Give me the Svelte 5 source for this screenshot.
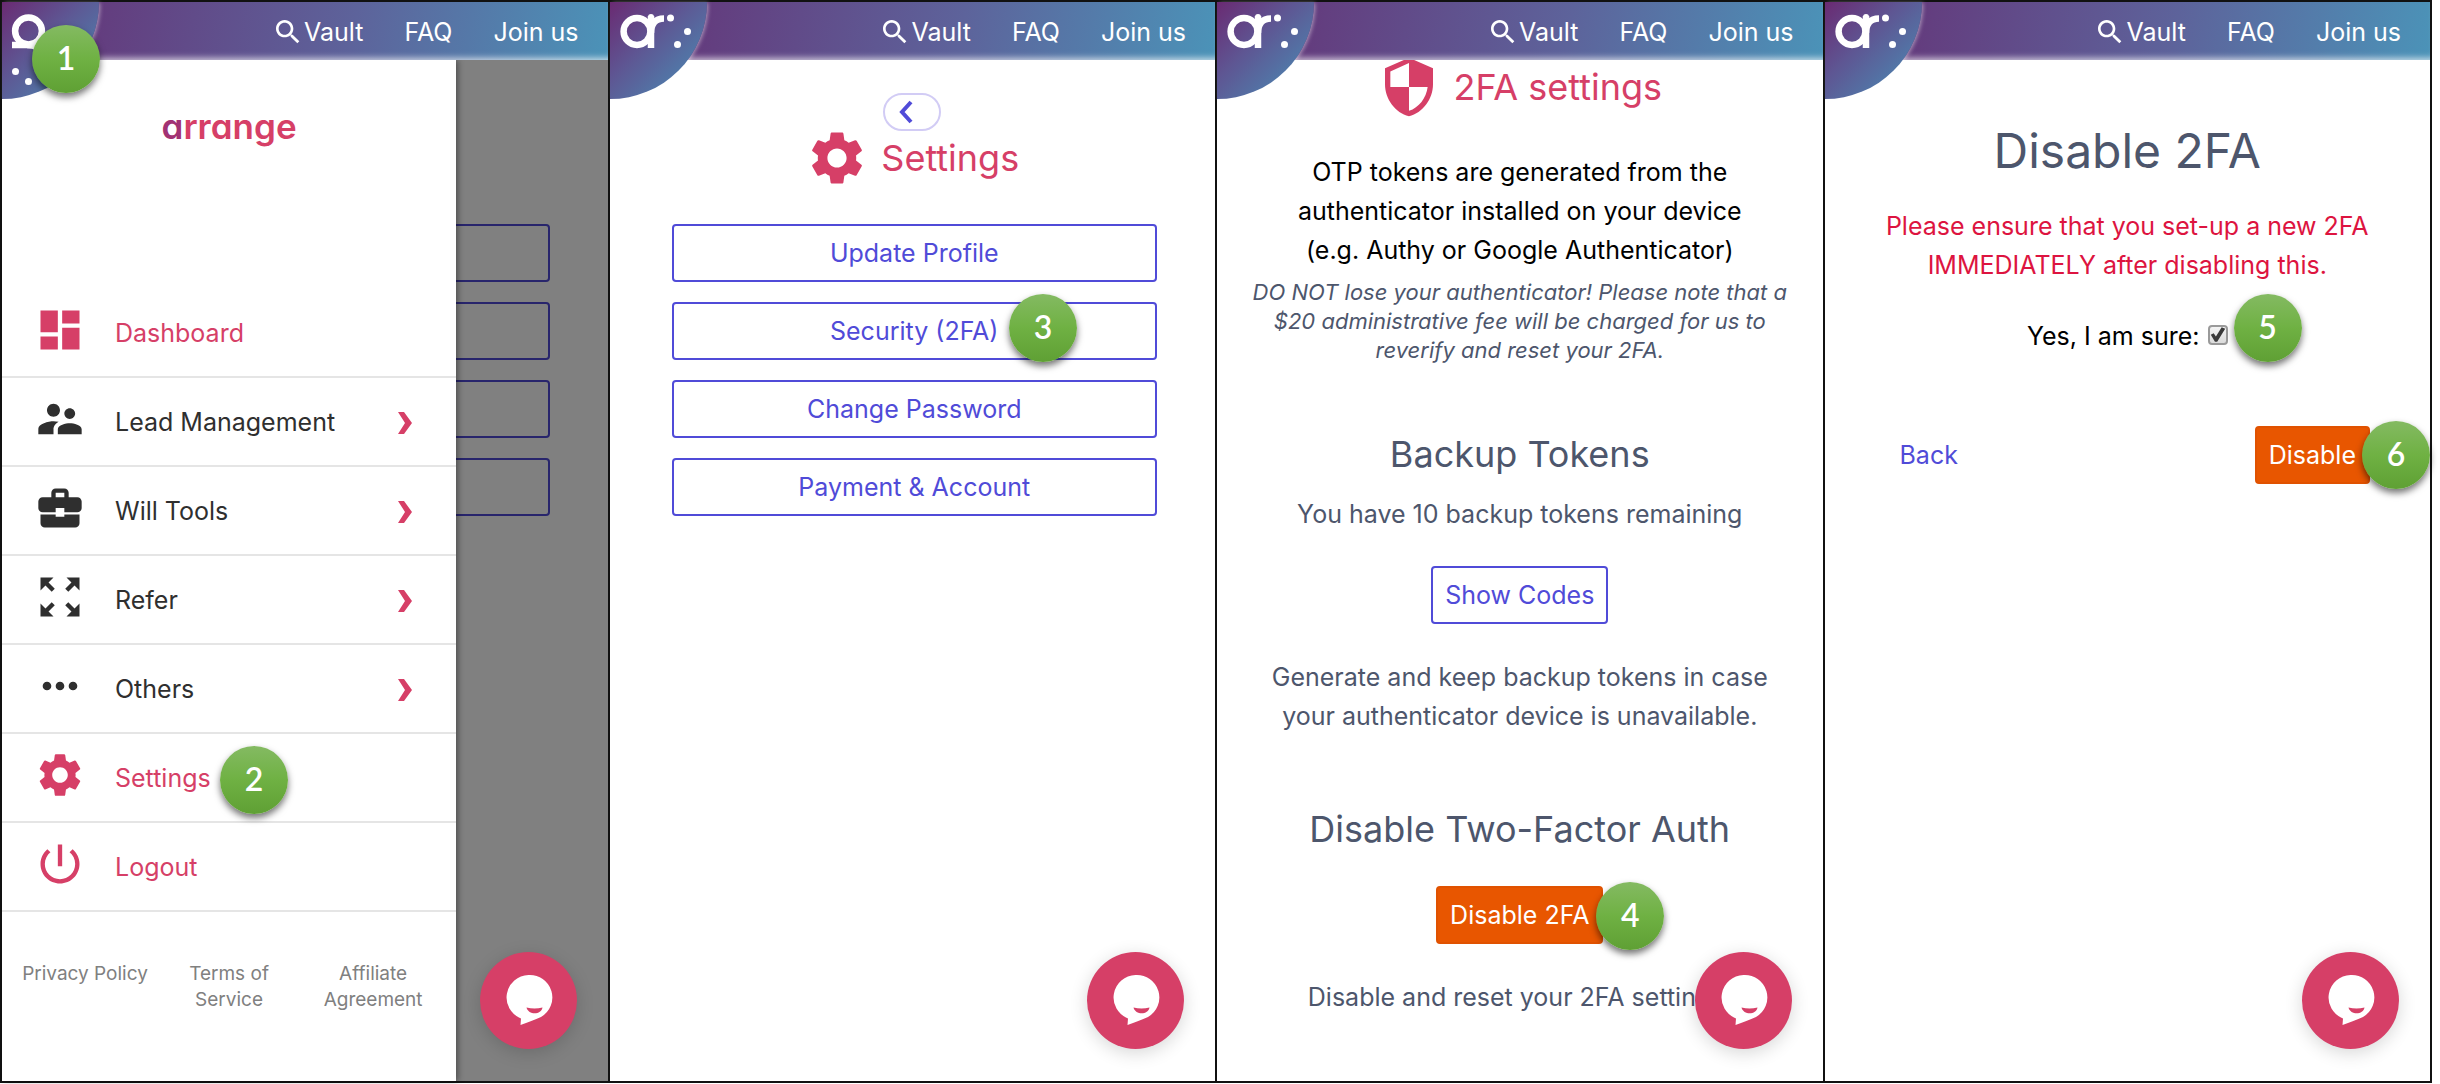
<script lang="ts">
  interface MenuItem {
    label: string;
    icon: string;
    accent?: boolean;
    expands?: boolean;
    step?: number;
  }

  const icons: Record<string, string> = {
    search: 'M15.5 14h-.79l-.28-.27C15.41 12.59 16 11.11 16 9.5 16 5.91 13.09 3 9.5 3S3 5.91 3 9.5 5.91 16 9.5 16c1.61 0 3.09-.59 4.23-1.57l.27.28v.79l5 4.99L20.49 19l-4.99-5zm-6 0C7.01 14 5 11.99 5 9.5S7.01 5 9.5 5 14 7.01 14 9.5 11.99 14 9.5 14z',
    dashboard: 'M3 13h8V3H3v10zm0 8h8v-6H3v6zm10 0h8V11h-8v10zm0-18v6h8V3h-8z',
    people: 'M16.5 12c1.38 0 2.49-1.12 2.49-2.5S17.88 7 16.5 7C15.12 7 14 8.12 14 9.5s1.12 2.5 2.5 2.5zM9 11c1.66 0 2.99-1.34 2.99-3S10.66 5 9 5C7.34 5 6 6.34 6 8s1.34 3 3 3zm7.5 3c-1.83 0-5.5.92-5.5 2.75V19h11v-2.25c0-1.83-3.67-2.75-5.5-2.75zM9 13c-2.33 0-7 1.17-7 3.5V19h7v-2.25c0-.85.33-2.34 2.37-3.47C10.5 13.1 9.66 13 9 13z',
    briefcase: 'M10 16v-1H3v4c0 1.11.89 2 2 2h14c1.11 0 2-.89 2-2v-4h-7v1h-4zm10-9h-4V5c0-1.11-.89-2-2-2h-4c-1.11 0-2 .89-2 2v2H4c-1.1 0-2 .9-2 2v3c0 1.11.89 2 2 2h6v-2h4v2h6c1.1 0 2-.9 2-2V9c0-1.1-.9-2-2-2zm-6 0h-4V5h4v2z',
    expand: 'M15 3l2.3 2.3-2.89 2.87 1.42 1.42L18.7 6.7 21 9V3zM3 9l2.3-2.3 2.87 2.89 1.42-1.42L6.7 5.3 9 3H3zm6 12l-2.3-2.3 2.89-2.87-1.42-1.42L5.3 17.3 3 15v6zm12-6l-2.3 2.3-2.87-2.89-1.42 1.42 2.89 2.87L15 21h6z',
    more: 'M6 10c-1.1 0-2 .9-2 2s.9 2 2 2 2-.9 2-2-.9-2-2-2zm12 0c-1.1 0-2 .9-2 2s.9 2 2 2 2-.9 2-2-.9-2-2-2zm-6 0c-1.1 0-2 .9-2 2s.9 2 2 2 2-.9 2-2-.9-2-2-2z',
    gear: 'M19.14 12.94c.04-.3.06-.61.06-.94 0-.32-.02-.64-.07-.94l2.03-1.58c.18-.14.23-.41.12-.61l-1.92-3.32c-.12-.22-.37-.29-.59-.22l-2.39.96c-.5-.38-1.03-.7-1.62-.94l-.36-2.54c-.04-.24-.24-.41-.48-.41h-3.84c-.24 0-.43.17-.47.41l-.36 2.54c-.59.24-1.13.57-1.62.94l-2.39-.96c-.22-.08-.47 0-.59.22L2.74 8.87c-.12.21-.08.47.12.61l2.03 1.58c-.05.3-.09.63-.09.94s.02.64.07.94l-2.03 1.58c-.18.14-.23.41-.12.61l1.92 3.32c.12.22.37.29.59.22l2.39-.96c.5.38 1.03.7 1.62.94l.36 2.54c.05.24.24.41.48.41h3.84c.24 0 .44-.17.47-.41l.36-2.54c.59-.24 1.13-.56 1.62-.94l2.39.96c.22.08.47 0 .59-.22l1.92-3.32c.12-.22.07-.47-.12-.61l-2.01-1.58zM12 15.6c-1.98 0-3.6-1.62-3.6-3.6s1.62-3.6 3.6-3.6 3.6 1.62 3.6 3.6-1.62 3.6-3.6 3.6z',
    power: 'M13 3h-2v10h2V3zm4.83 2.17l-1.42 1.42C17.99 7.86 19 9.81 19 12c0 3.87-3.13 7-7 7s-7-3.13-7-7c0-2.19 1.01-4.14 2.58-5.42L6.17 5.17C4.23 6.82 3 9.26 3 12c0 4.97 4.03 9 9 9s9-4.03 9-9c0-2.74-1.23-5.18-3.17-6.83z',
    shield: 'M12 1L3 5v6c0 5.55 3.84 10.74 9 12 5.16-1.26 9-6.45 9-12V5l-9-4zM12 3v9H5V6.2zM12 12h7c-.53 4.12-3.28 7.79-7 8.94z',
  };

  const menu: MenuItem[] = [
    { label: 'Dashboard', icon: 'dashboard', accent: true },
    { label: 'Lead Management', icon: 'people', expands: true },
    { label: 'Will Tools', icon: 'briefcase', expands: true },
    { label: 'Refer', icon: 'expand', expands: true },
    { label: 'Others', icon: 'more', expands: true },
    { label: 'Settings', icon: 'gear', accent: true, step: 2 },
    { label: 'Logout', icon: 'power', accent: true },
  ];

  const legal = ['Privacy Policy', 'Terms of Service', 'Affiliate Agreement'];
  const settings = ['Update Profile', 'Security (2FA)', 'Change Password', 'Payment & Account'];

  let sure = $state(true);
</script>

{#snippet icon(name: string)}
  <svg class="icon" viewBox="0 0 24 24" aria-hidden="true">
    <path fill="currentColor" fill-rule="evenodd" d={icons[name]} />
  </svg>
{/snippet}

{#snippet step(n: number)}
  <span class="step step-{n}">{n}</span>
{/snippet}

{#snippet header(open: boolean)}
  <header class="topbar">
    <button class="corner" class:open aria-label="Menu">
      <svg viewBox="0 0 97 97" aria-hidden="true">
        <g fill="none" stroke="#fff" stroke-width="6.5">
          <circle cx="27" cy="29.500" r="13.400" />
          <line x1="41" y1="14" x2="41" y2="46" />
          <path d="M41 31c0-9 4-14.500 13-14.500" />
        </g>
        <g fill="#fff">
          <circle cx="41" cy="15" r="3" />
          <circle cx="60.500" cy="16" r="3.500" />
          <circle cx="77.500" cy="29.500" r="3.500" />
          <circle cx="67.500" cy="42.500" r="3.500" />
        </g>
      </svg>
    </button>
    <nav>
      <a class="vault" href="#vault">{@render icon('search')}Vault</a>
      <a href="#faq">FAQ</a>
      <a href="#join">Join us</a>
    </nav>
    {#if open}{@render step(1)}{/if}
  </header>
{/snippet}

{#snippet chat()}
  <button class="chat" aria-label="Open chat">
    <svg viewBox="0 0 97 97" aria-hidden="true">
      <path fill="#fff" d="M48.500 23a22.500 22.500 0 0 1 12.500 42C55 68 48 70 40.500 73l.5-6.500A22.500 22.500 0 0 1 48.500 23z" />
      <path fill="#d63f67" d="M46.500 55.500c5 1.200 11 1.200 16 0-1 7.500-14 8-16 0z" />
    </svg>
  </button>
{/snippet}

<main class="board">
  <section class="panel">
    {@render header(true)}
    <div class="backdrop">
      {#each settings as _}
        <div class="ghost"></div>
      {/each}
    </div>
    <aside class="drawer">
      <div class="wordmark"><span>a</span>rrange</div>
      <ul class="menu">
        {#each menu as item}
          <li>
            <a class:accent={item.accent} href="#menu">
              {@render icon(item.icon)}
              <span class="label">
                {item.label}
                {#if item.step}{@render step(item.step)}{/if}
              </span>
              {#if item.expands}
                <svg class="chevron" viewBox="0 0 14 22" aria-hidden="true">
                  <path fill="currentColor" d="M0 0h6l8 11-8 11H0l7-11z" />
                </svg>
              {/if}
            </a>
          </li>
        {/each}
      </ul>
      <footer>
        {#each legal as label}
          <a href="#legal">{label}</a>
        {/each}
      </footer>
    </aside>
    {@render chat()}
  </section>

  <section class="panel">
    {@render header(false)}
    <div class="page settings">
      <button class="back-pill" aria-label="Go back">
        <svg viewBox="0 0 14 24" aria-hidden="true">
          <path fill="none" stroke="currentColor" stroke-width="4" d="M12 2L3 12l9 10" />
        </svg>
      </button>
      <h1 class="title">{@render icon('gear')}Settings</h1>
      <div class="settings-list">
        {#each settings as label, i}
          <button class="btn outline">
            {label}
            {#if i === 1}{@render step(3)}{/if}
          </button>
        {/each}
      </div>
    </div>
    {@render chat()}
  </section>

  <section class="panel">
    {@render header(false)}
    <div class="page two-fa">
      <h1 class="title">{@render icon('shield')}2FA settings</h1>
      <p class="lead">
        OTP tokens are generated from the<br />authenticator installed on your device<br />(e.g. Authy or Google Authenticator)
      </p>
      <p class="note">
        DO NOT lose your authenticator! Please note that a<br />$20 administrative fee will be charged for us to<br />reverify and reset your 2FA.
      </p>
      <h2>Backup Tokens</h2>
      <p>You have 10 backup tokens remaining</p>
      <button class="btn outline">Show Codes</button>
      <p>Generate and keep backup tokens in case<br />your authenticator device is unavailable.</p>
      <h2 class="second">Disable Two-Factor Auth</h2>
      <button class="btn danger">Disable 2FA{@render step(4)}</button>
      <p>Disable and reset your 2FA settings.</p>
    </div>
    {@render chat()}
  </section>

  <section class="panel">
    {@render header(false)}
    <div class="page disable">
      <h1>Disable 2FA</h1>
      <p class="warning">Please ensure that you set-up a new 2FA<br />IMMEDIATELY after disabling this.</p>
      <div class="confirm">
        <label for="sure">Yes, I am sure:</label>
        <input id="sure" type="checkbox" bind:checked={sure} />
        {@render step(5)}
      </div>
      <div class="actions">
        <a href="#back">Back</a>
        <button class="btn danger">Disable{@render step(6)}</button>
      </div>
    </div>
    {@render chat()}
  </section>
</main>

<style>
:global(body) { background: #fff; }

.board {
  --pink: #d63f67;
  --indigo: #504bd8;
  --slate: #4d566c;
  display: grid;
  grid-template-columns: repeat(4, 1fr);
  box-sizing: border-box;
  min-height: calc(100vh - 1px);
  margin: 0 8px 1px 0;
  border: 2px solid #111;
  border-left: 0;
  font-family: Inter, "Liberation Sans", sans-serif;
  font-size: 25px;
  line-height: 39px;
  color: var(--slate);
}

.panel {
  position: relative;
  display: flex;
  flex-direction: column;
  min-width: 0;
  border-left: 2px solid #111;
}

button { font: inherit; cursor: pointer; }
a { color: inherit; text-decoration: none; }
h1, h2, p, ul { margin: 0; padding: 0; font-weight: 400; }
.icon { flex: none; width: 52px; height: 52px; }

/* top bar */
.topbar {
  position: relative;
  z-index: 3;
  display: flex;
  justify-content: flex-end;
  align-items: center;
  height: 58px;
  padding-right: 29px;
  color: #fff;
  background: linear-gradient(100deg, #662a72 0%, #633f80 18%, #5d639b 58%, #4b93b8 100%);
  box-shadow: inset 0 -7px 6px -5px rgba(255, 255, 255, .7);
}
.topbar nav { display: flex; gap: 41px; padding-top: 2px; }
.topbar a { display: flex; align-items: center; }
.topbar .icon { width: 32px; height: 32px; }
.corner {
  position: absolute;
  top: 0;
  left: 0;
  width: 97px;
  height: 97px;
  padding: 0;
  border: 0;
  border-radius: 0 0 100% 0;
  background: linear-gradient(135deg, #6a2a72 0%, #5e5693 40%, #4f7dab 78%);
  box-shadow: 2px 0 4px -1px rgba(255, 255, 255, .5);
}
.corner svg { display: block; transform-origin: 27px 29px; }
.corner.open svg { transform: rotate(90deg); }

/* numbered markers */
.step {
  position: absolute;
  z-index: 4;
  width: 68px;
  height: 68px;
  border-radius: 50%;
  background: linear-gradient(#84ba62, #6fb143 50%, #5fa034);
  box-shadow: 0 4px 7px rgba(0, 0, 0, .55);
  color: #fff;
  font: 600 32px/66px Lato, sans-serif;
  text-align: center;
}
.step-1 { top: 23px; left: 30px; }
.step-2 { top: -11px; left: 105px; }
.step-3 { top: -10px; right: 78px; }
.step-4 { top: -6px; right: -63px; }
.step-5 { top: -23px; right: -74px; }
.step-6 { top: -7px; right: -62px; }

/* chat bubble */
.chat {
  position: absolute;
  z-index: 3;
  right: 31px;
  bottom: 32px;
  width: 97px;
  height: 97px;
  padding: 0;
  border: 0;
  border-radius: 50%;
  background: var(--pink);
  box-shadow: 0 4px 18px rgba(0, 0, 0, .16);
}
.chat svg { display: block; }

/* menu drawer */
.backdrop {
  flex: 1;
  display: flex;
  flex-direction: column;
  gap: 20px;
  padding: 164px 58px 0 62px;
  background: #808080;
}
.ghost { height: 54px; border: 2px solid #28256c; border-radius: 4px; }
.drawer {
  position: absolute;
  z-index: 2;
  top: 58px;
  bottom: 0;
  left: 0;
  width: 75%;
  background: #fff;
  box-shadow: 2px 0 6px rgba(0, 0, 0, .4);
}
.wordmark {
  height: 141px;
  padding-top: 47px;
  margin-bottom: 41px;
  color: var(--pink);
  font-size: 35px;
  font-weight: 600;
  font-feature-settings: "cv11", "ss01";
  text-align: center;
}
.wordmark span { color: #a23273; }
.menu { list-style: none; color: #2f2f2f; }
.menu a {
  display: flex;
  align-items: center;
  height: 87px;
  padding: 0 44px 0 32px;
  border-bottom: 2px solid #e5e5e5;
}
.menu a.accent { color: var(--pink); }
.menu .icon { margin: 0 29px 6px 0; }
.label { position: relative; flex: 1; padding-top: 2px; }
.chevron { width: 14px; height: 22px; padding-top: 2px; color: var(--pink); }
footer {
  display: grid;
  grid-template-columns: repeat(3, 1fr);
  padding: 49px 11px 0;
  color: #808080;
  font-size: 19px;
  line-height: 26px;
  text-align: center;
}
footer a { padding: 0 6px; }

/* pages */
.page {
  display: flex;
  flex-direction: column;
  align-items: center;
  text-align: center;
}
.title {
  display: flex;
  align-items: center;
  gap: 12px;
  color: var(--pink);
  font-size: 36px;
  line-height: 64px;
}
.title .icon { width: 64px; height: 64px; }
h2 { font-size: 36px; line-height: 58px; }
.btn {
  position: relative;
  box-sizing: border-box;
  height: 58px;
  padding: 0 12px;
  border: 2px solid var(--indigo);
  border-radius: 4px;
  background: #fff;
  color: var(--indigo);
}
.btn.danger { border-color: #e05200; background: #e85600; color: #fff; }

.settings { padding-top: 33px; }
.back-pill {
  display: flex;
  align-items: center;
  box-sizing: border-box;
  width: 58px;
  height: 38px;
  padding: 0 14px;
  border: 2px solid #d2ccf5;
  border-radius: 19px;
  background: #fff;
  color: var(--indigo);
}
.back-pill svg { width: 14px; height: 24px; }
.settings .title { margin: -5px 0 34px; }
.settings-list {
  display: flex;
  flex-direction: column;
  align-self: stretch;
  gap: 20px;
  padding: 0 58px 0 62px;
}

.two-fa .title { margin-top: -5px; margin-bottom: 34px; }
.lead { color: #000; }
.note { margin: 8px 0 60px; font-size: 22px; font-style: italic; line-height: 29px; }
.two-fa h2 + p { margin: 12px 0 32px; }
.two-fa .btn + p { margin-top: 34px; }
.two-fa h2.second { margin: 64px 0 28px; }

.disable { padding: 54px 60px 0; }
.disable h1 { font-size: 48px; line-height: 74px; }
.warning { margin-top: 19px; color: #dd1440; }
.confirm {
  position: relative;
  display: flex;
  align-items: center;
  gap: 8px;
  margin: 32px 0 70px;
  color: #000;
}
input {
  appearance: none;
  width: 20px;
  height: 20px;
  margin: 0 0 4px;
  border: 2px solid #9a9a9a;
  border-radius: 4px;
  background: linear-gradient(#f4f4f4, #dcdcdc);
}
input:checked::before {
  content: "";
  display: block;
  height: 16px;
  background: #3a3a3a;
  clip-path: polygon(8% 52%, 26% 42%, 40% 62%, 76% 4%, 98% 14%, 48% 96%, 34% 96%);
}
.actions {
  display: flex;
  justify-content: space-between;
  align-items: center;
  align-self: stretch;
  padding-left: 15px;
  color: var(--indigo);
}
</style>
